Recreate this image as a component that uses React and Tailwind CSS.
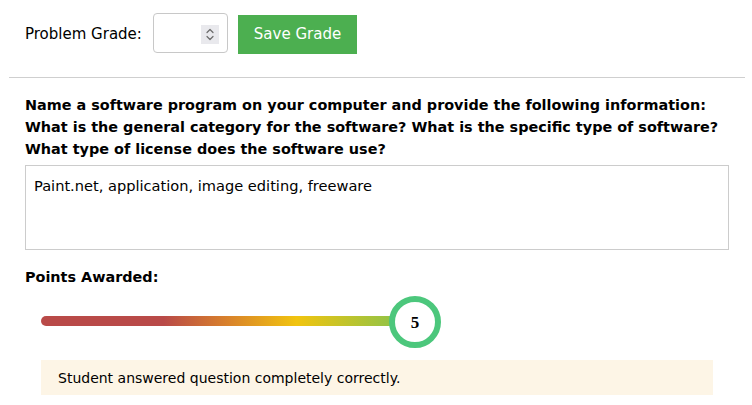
export default function App() {
  return (
    <div className="w-[752px] h-[405px] overflow-hidden bg-white text-black font-['DejaVu_Sans',Verdana,sans-serif] text-[14px]">
      <div className="flex items-center pt-[11px] pl-[25px]">
        <span className="w-[117px] text-[15px] leading-[22px] mt-[3px] whitespace-nowrap">Problem Grade:</span>
        <div className="relative ml-[11px] w-[75px] h-[40px] rounded-[4px] border border-[#c8c8c8] bg-white">
          <div className="absolute left-[47px] top-[11px] w-[18px] h-[19px] bg-[#e9e9ed] flex items-center justify-center">
            <svg width="10" height="15" viewBox="0 0 10 15" fill="none" stroke="#6b6b6b" strokeWidth="1.2" strokeLinecap="round" strokeLinejoin="round">
              <path d="M2 5.5 L5 2.5 L8 5.5" />
              <path d="M2 9.5 L5 12.5 L8 9.5" />
            </svg>
          </div>
        </div>
        <button className="ml-[10px] mt-[4px] w-[119px] h-[39px] bg-[#4caf50] text-white text-[15px] leading-none">
          Save Grade
        </button>
      </div>
      <div className="ml-[9px] mr-[7px] mt-[23px] border-t border-[#cfcfcf]"></div>
      <div className="px-[25px] pr-[23px]">
        <div className="mt-[16px] font-bold text-[14.4px] leading-[22px]">
          Name a software program on your computer and provide the following information: What is the general category for the software? What is the specific type of software? What type of license does the software use?
        </div>
        <div className="mt-[5px] h-[85px] border border-[#cccccc] px-[8px] pt-[10px] text-[14.6px] leading-[20px]">
          Paint.net, application, image editing, freeware
        </div>
        <div className="mt-[16px] font-bold text-[14.4px] leading-[22px]">Points Awarded:</div>
      </div>
      <div className="relative ml-[41px] mt-[8px] h-[52px] w-[400px]">
        <div className="absolute left-0 top-[20px] w-[360px] h-[10px] rounded-l-full bg-[linear-gradient(to_right,#b94a48_0%,#b94a48_34%,#d9822b_52%,#f1c40f_71%,#8bc34a_100%)]"></div>
        <div className="absolute left-[348px] top-0 w-[52px] h-[52px] rounded-full border-[6px] border-[#4cc77c] bg-white flex items-center justify-center">
          <span className="font-['Liberation_Serif',serif] font-bold text-[17px] leading-none">5</span>
        </div>
      </div>
      <div className="ml-[41px] mt-[12px] w-[672px] h-[35px] bg-[#fdf5e6] flex items-center pl-[17px] leading-[20px]">
        Student answered question completely correctly.
      </div>
    </div>
  );
}
